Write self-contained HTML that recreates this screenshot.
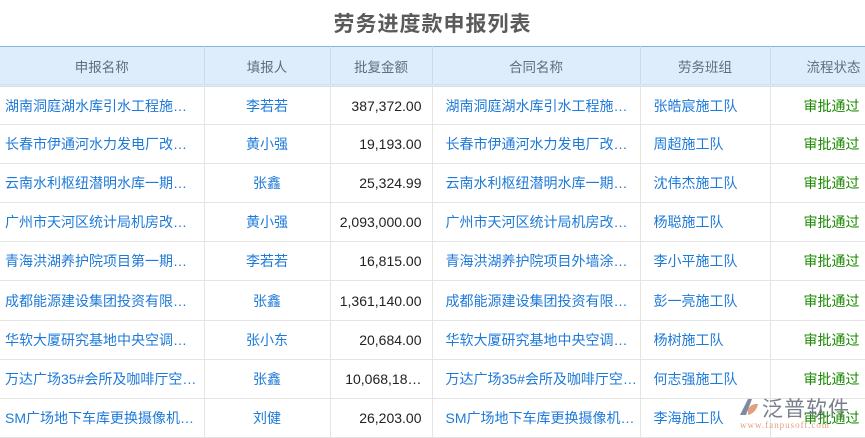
<!DOCTYPE html>
<html><head><meta charset="utf-8"><style>
*{margin:0;padding:0;box-sizing:border-box}
body{width:865px;height:434px;overflow:hidden;background:#fff;font-family:"Liberation Sans","Noto Sans CJK SC",sans-serif;font-size:13px;position:relative}
h1{position:absolute;top:8px;left:0;width:865px;text-align:center;font-size:21px;font-weight:bold;color:#5a5a5a;letter-spacing:1px}
table{position:absolute;top:46px;left:0;border-collapse:collapse;table-layout:fixed;width:870px}
th{height:39px;background:#deedfb;color:#5f6f80;font-weight:normal;border-top:1px solid #7db6e8;border-right:1px solid #c9dced;border-bottom:3px double #d3dfea;font-size:13.5px}
td{height:39.1px;border-right:1px solid #e4e4e4;border-bottom:1px solid #e4e4e4;white-space:nowrap;overflow:hidden;color:#1e7ad8;font-size:14px}
.l{padding-left:5px}.c{text-align:center}.r{text-align:right;padding-right:10px;color:#222}
.t{padding-left:13px}.s{text-align:right;padding-right:10px;color:#1a8a00}
.logo{position:absolute;left:736px;top:393px;width:125px;height:40px}
</style></head><body>
<h1>劳务进度款申报列表</h1>
<table>
<colgroup><col style="width:204px"><col style="width:126px"><col style="width:102px"><col style="width:208px"><col style="width:130px"><col style="width:100px"></colgroup>
<tr><th>申报名称</th><th>填报人</th><th>批复金额</th><th>合同名称</th><th>劳务班组</th><th style="text-align:left;padding-left:36px">流程状态</th></tr>
<tr><td class="l">湖南洞庭湖水库引水工程施…</td><td class="c">李若若</td><td class="r">387,372.00</td><td class="l t">湖南洞庭湖水库引水工程施…</td><td class="t">张皓宸施工队</td><td class="s">审批通过</td></tr>
<tr><td class="l">长春市伊通河水力发电厂改…</td><td class="c">黄小强</td><td class="r">19,193.00</td><td class="l t">长春市伊通河水力发电厂改…</td><td class="t">周超施工队</td><td class="s">审批通过</td></tr>
<tr><td class="l">云南水利枢纽潜明水库一期…</td><td class="c">张鑫</td><td class="r">25,324.99</td><td class="l t">云南水利枢纽潜明水库一期…</td><td class="t">沈伟杰施工队</td><td class="s">审批通过</td></tr>
<tr><td class="l">广州市天河区统计局机房改…</td><td class="c">黄小强</td><td class="r">2,093,000.00</td><td class="l t">广州市天河区统计局机房改…</td><td class="t">杨聪施工队</td><td class="s">审批通过</td></tr>
<tr><td class="l">青海洪湖养护院项目第一期…</td><td class="c">李若若</td><td class="r">16,815.00</td><td class="l t">青海洪湖养护院项目外墙涂…</td><td class="t">李小平施工队</td><td class="s">审批通过</td></tr>
<tr><td class="l">成都能源建设集团投资有限…</td><td class="c">张鑫</td><td class="r">1,361,140.00</td><td class="l t">成都能源建设集团投资有限…</td><td class="t">彭一亮施工队</td><td class="s">审批通过</td></tr>
<tr><td class="l">华软大厦研究基地中央空调…</td><td class="c">张小东</td><td class="r">20,684.00</td><td class="l t">华软大厦研究基地中央空调…</td><td class="t">杨树施工队</td><td class="s">审批通过</td></tr>
<tr><td class="l">万达广场35#会所及咖啡厅空…</td><td class="c">张鑫</td><td class="r">10,068,18…</td><td class="l t">万达广场35#会所及咖啡厅空…</td><td class="t">何志强施工队</td><td class="s">审批通过</td></tr>
<tr><td class="l">SM广场地下车库更换摄像机…</td><td class="c">刘健</td><td class="r">26,203.00</td><td class="l t">SM广场地下车库更换摄像机…</td><td class="t">李海施工队</td><td class="s">审批通过</td></tr>
</table>
<div class="logo">
<svg width="26" height="26" style="position:absolute;left:0;top:2px" viewBox="0 0 26 26"><path d="M4 20 L12 4 L16 4 L10 20Z" fill="#7d8aa0"/><path d="M12 14 Q16 8 22 9 Q20 18 12 20Z" fill="#e0a080"/></svg>
<div style="position:absolute;left:26px;top:0;font-size:21px;color:#6a7380;letter-spacing:1px;opacity:.9">泛普软件</div>
<div style="position:absolute;left:4px;top:27px;font-size:9px;color:#e0a080;font-family:'Liberation Serif',serif;letter-spacing:1px">www.fanpusoft.com</div>
</div>
</body></html>
